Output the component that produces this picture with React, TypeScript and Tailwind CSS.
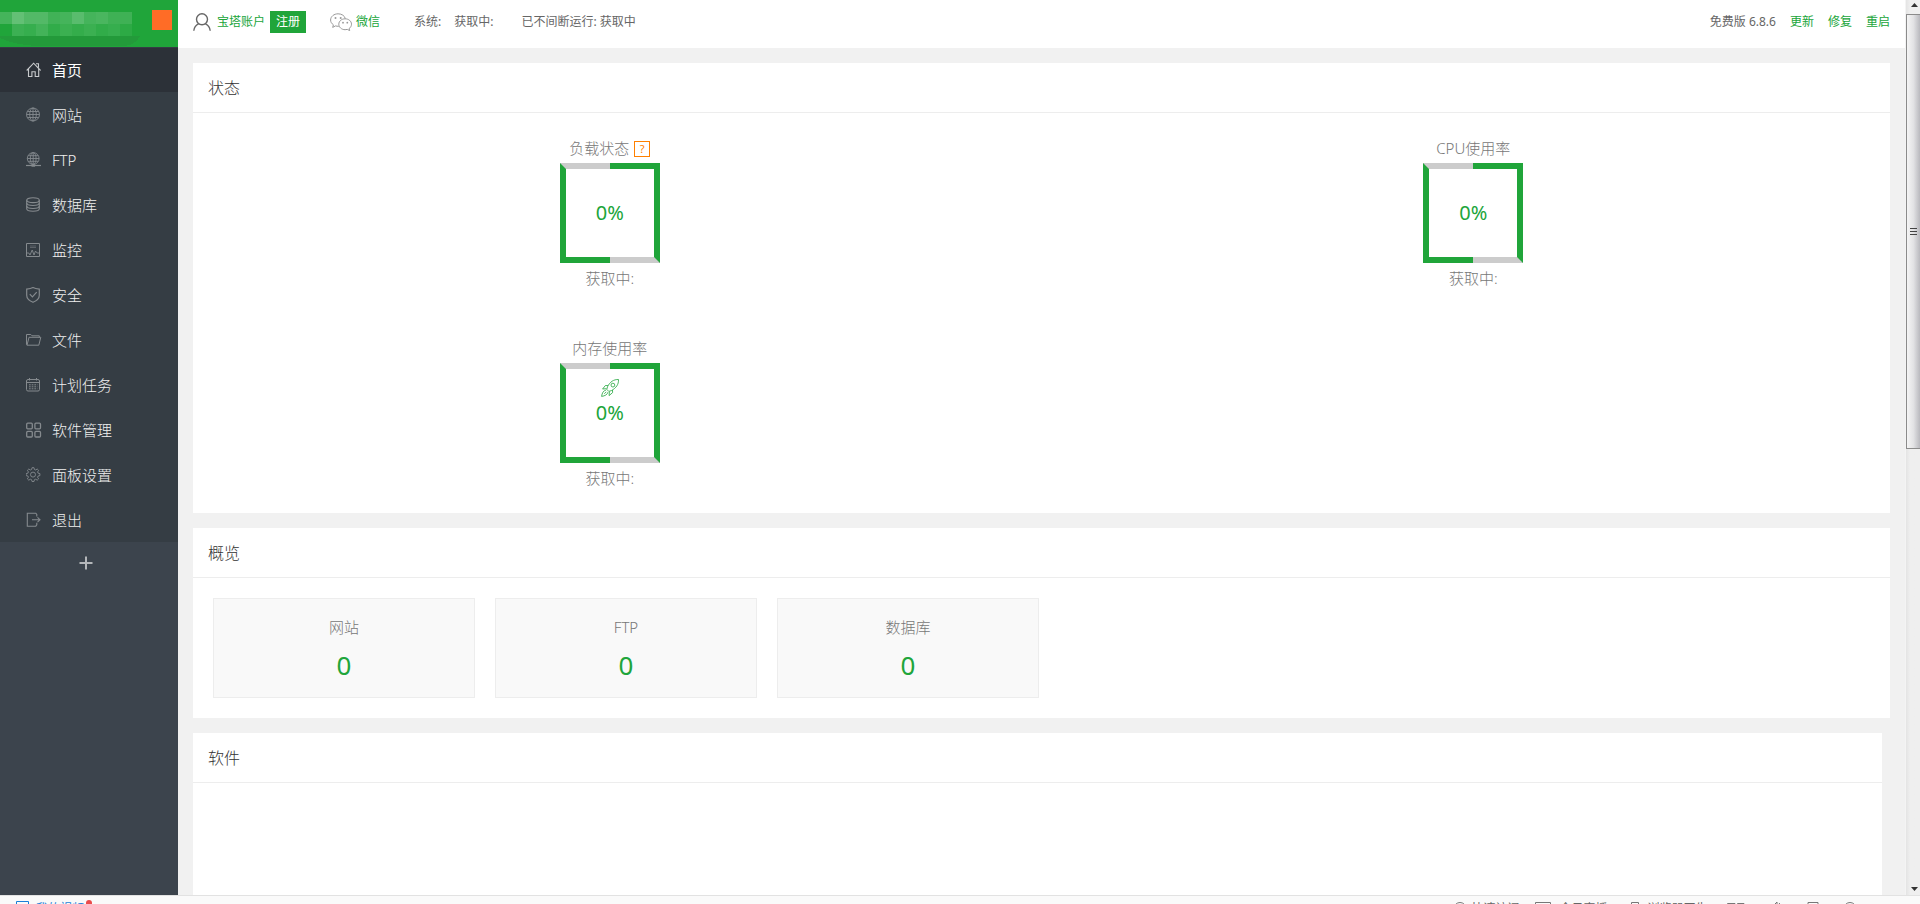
import React from 'react';

const ICON = 'size-4 shrink-0 fill-none stroke-current';

const HomeIcon = () => (
  <svg viewBox="0 0 16 16" className={ICON} strokeWidth="1.1">
    <path d="M.7 8.500 7.600 1.200l7 7.300" />
    <path d="M2.500 7v7.500h3.400V9.800h3.300v4.700h3.500V7" />
    <path d="M10 1.700h2.500v4" />
  </svg>
);

const GlobeIcon = () => (
  <svg viewBox="0 0 16 16" className={ICON} strokeWidth="0.9">
    <circle cx="7" cy="7.500" r="6.500" />
    <ellipse cx="7" cy="7.500" rx="3.300" ry="6.500" />
    <path d="M7 1v13M.5 7.500h13M1.500 4.500h11M1.500 10.500h11" />
  </svg>
);

const FtpIcon = () => (
  <svg viewBox="0 0 16 16" className={ICON} strokeWidth="0.9">
    <circle cx="7.2" cy="6.500" r="5.900" />
    <ellipse cx="7.2" cy="6.500" rx="2.900" ry="5.900" />
    <path d="M7.200.6v13M1.300 6.500h11.800M2.200 3.700h10M2.200 9.300h10" />
    <path d="M0 13.500h15" strokeWidth="1.200" />
    <path d="M5.500 13.500h3.600" strokeWidth="2.400" />
  </svg>
);

const DatabaseIcon = () => (
  <svg viewBox="0 0 16 16" className={ICON} strokeWidth="1.100">
    <ellipse cx="7" cy="3.200" rx="6.300" ry="2.400" />
    <path d="M.7 3.200v8.600c0 1.400 2.800 2.500 6.300 2.500s6.300-1.100 6.300-2.500V3.200" />
    <path d="M.7 6c0 1.400 2.800 2.500 6.300 2.500S13.300 7.400 13.300 6M.7 9c0 1.400 2.800 2.500 6.300 2.500s6.300-1.100 6.300-2.500" />
  </svg>
);

const MonitorIcon = () => (
  <svg viewBox="0 0 16 16" className={ICON} strokeWidth="1">
    <path d="M.5 1.500h13v13H.5z" />
    <path d="M4 4h6M4 5.500h6" strokeOpacity="0.500" />
    <path d="M1 11h1.800L4 13l2.200-5 1.800 5 1.500-4 1.600 2h2.400" strokeWidth="0.900" />
  </svg>
);

const ShieldIcon = () => (
  <svg viewBox="0 0 16 16" className={ICON} strokeWidth="1.200">
    <path d="M7 .6C5.100 1.700 3 2 .7 2.100v6.100c0 3.300 2.600 5.500 6.300 7.100 3.700-1.600 6.300-3.800 6.300-7.100V2.100C11 2 8.900 1.700 7 .6z" />
    <path d="m3.800 7.200 2.600 2.600 4.300-4.700" />
  </svg>
);

const FolderIcon = () => (
  <svg viewBox="0 0 16 16" className={ICON} strokeWidth="1">
    <path d="M1 13.200c-.4-.2-.5-.5-.5-1V2.500h4.300l1.200 1.300h7.300v1.600" />
    <path d="M1 13.200 3 5.300h11.800l-2 7.900z" />
  </svg>
);

const CalendarIcon = () => (
  <svg viewBox="0 0 16 16" className={ICON} strokeWidth="1">
    <rect x="0.500" y="2.500" width="13" height="11.500" rx="1.500" />
    <path d="M.5 5.500h13M3.500 1v2.500M10.500 1v2.500" />
    <path d="M3 7.800h8.500M3 9.800h8.500M3 11.800h8.500" strokeDasharray="1.700 1" />
  </svg>
);

const GridIcon = () => (
  <svg viewBox="0 0 16 16" className={ICON} strokeWidth="1.300">
    <rect x="0.700" y="1.200" width="5.600" height="5.600" rx="1" />
    <rect x="8.900" y="1.200" width="5.600" height="5.600" rx="1" />
    <rect x="0.700" y="9.400" width="5.600" height="5.600" rx="1" />
    <rect x="8.900" y="9.400" width="5.600" height="5.600" rx="1" />
  </svg>
);

const GearIcon = () => (
  <svg viewBox="0.500 0.500 16 16" className={ICON} strokeWidth="0.900">
    <path d="M6.500 1.200h2l.4 1.800 1.300.5 1.500-1 1.400 1.400-1 1.500.5 1.300 1.800.4v2l-1.800.4-.5 1.300 1 1.500-1.400 1.400-1.500-1-1.300.5-.4 1.800h-2l-.4-1.800-1.300-.5-1.500 1-1.400-1.400 1-1.500-.5-1.300L.6 9.100v-2l1.800-.4.5-1.300-1-1.500 1.400-1.400 1.500 1L6.100 3z" />
    <circle cx="7.500" cy="8.100" r="2.500" />
  </svg>
);

const ExitIcon = () => (
  <svg viewBox="0 0 16 16" className={ICON} strokeWidth="1.100">
    <path d="M10.800 4.500v-2L9.800 1.200H1.300v13h8.500l1-1.300v-2.200" />
    <path d="M6 7.700h8M11.500 5.300 14 7.700l-2.500 2.400" />
  </svg>
);

const UserIcon = () => (
  <svg viewBox="0 0 18 18" className="size-[18px] shrink-0 fill-none stroke-[#666]" strokeWidth="1.400">
    <circle cx="9" cy="6.300" r="5.500" />
    <path d="M.8 17.800c.3-3.500 2-5.800 4.800-7M17.200 17.800c-.3-3.500-2-5.800-4.800-7" />
  </svg>
);

const WechatIcon = () => (
  <svg viewBox="0 0 22 18" className="h-[18px] w-[22px] shrink-0 fill-none stroke-[#999]" strokeWidth="1">
    <path d="M15.300 5.600C14.700 2.800 11.700.8 8.100.8 4 .8.600 3.500.6 7c0 2 1 3.600 2.800 4.800l-.7 2.600 2.800-1.500c1 .3 2 .4 3.300.4" />
    <path d="M15.100 5.800c-3.500 0-6.300 2.400-6.300 5.400s2.800 5.500 6.300 5.500c.8 0 1.500-.1 2.200-.3l2.400 1.200-.6-2c1.400-1 2.400-2.600 2.400-4.400 0-3-2.900-5.400-6.400-5.400z" />
    <g className="fill-[#999] stroke-none">
      <circle cx="5.500" cy="5" r="1" />
      <circle cx="10.700" cy="5" r="1" />
      <circle cx="13" cy="9.700" r="0.900" />
      <circle cx="17.300" cy="9.700" r="0.900" />
    </g>
  </svg>
);

const RocketIcon = () => (
  <svg viewBox="0 0 18 18" className="size-[18px] fill-none stroke-[#20a53a]" strokeWidth="0.800">
    <path d="M17.500.5c-4.700-.2-8.600 2.300-11 7.300l-.7 2.600 2 2 2.600-.8C15.200 9 17.800 5.300 17.500.5z" />
    <circle cx="11.900" cy="6.100" r="1.900" />
    <path d="M7 6.600 4.400 6.500 1.600 10l3.900-.3M11.500 11l.1 2.600-3.500 3 .3-4M4.900 11.200C2.600 11.400 1 14 .6 17.400c3.400-.4 6-2 6.300-4.200M5.300 12.800l-2 2" />
  </svg>
);

const menu = [
  { label: '首页', icon: HomeIcon, active: true },
  { label: '网站', icon: GlobeIcon },
  { label: 'FTP', icon: FtpIcon },
  { label: '数据库', icon: DatabaseIcon },
  { label: '监控', icon: MonitorIcon },
  { label: '安全', icon: ShieldIcon },
  { label: '文件', icon: FolderIcon },
  { label: '计划任务', icon: CalendarIcon },
  { label: '软件管理', icon: GridIcon },
  { label: '面板设置', icon: GearIcon },
  { label: '退出', icon: ExitIcon },
];

const gauges = [
  { label: '负载状态', help: true },
  { label: 'CPU使用率' },
  { label: '内存使用率', rocket: true },
];

const totals = [
  { label: '网站', value: 0 },
  { label: 'FTP', value: 0 },
  { label: '数据库', value: 0 },
];

// opacity of each mosaic tile, 12px a tile
const mosaic = [
  [0.17, 0.3, 0.23, 0.23, 0.15, 0.17, 0.26, 0.17, 0.19, 0.14, 0.14],
  [0, 0.13, 0.1, 0.16, 0.08, 0.12, 0.09, 0.12, 0.08, 0.1, 0.06],
];

const Sidebar = () => (
  <aside className="w-[178px] shrink-0 bg-[#3c444d]">
    <div className="flex h-[47px] items-start justify-between bg-[#20a53a] pr-[6px]">
      <svg viewBox="0 0 142 47" className="h-[47px] w-[142px]" shapeRendering="crispEdges">
        {mosaic.map((row, y) =>
          row.map((o, x) => (
            <rect key={`${x}-${y}`} x={x * 12} y={12 + y * 12} width="12" height="12" fill="#fff" fillOpacity={o} />
          ))
        )}
        <path d="M0 36h140c-3 6-8 10-18 10H40C24 46 8 42 0 38z" fill="#239a3a" />
      </svg>
      <button aria-label="消息" className="mt-[10px] size-5 bg-[#ff6c26]" />
    </div>
    <nav>
      <ul className="flex flex-col gap-px bg-[#353d44] pt-px">
        {menu.map(({ label, icon: Icon, active }) => (
          <li key={label}>
            <a
              href="#"
              className={`flex h-11 items-center gap-[10px] pl-[26px] text-[15px] leading-5 ${
                active ? 'bg-[#2c3138] text-white' : 'font-light text-[#f0f0f0]'
              }`}
            >
              <span className={active ? 'text-[#c8cacc]' : 'text-[#858a8e]'}>
                <Icon />
              </span>
              {label}
            </a>
          </li>
        ))}
      </ul>
    </nav>
    <button aria-label="添加" className="flex h-[42px] w-full items-center justify-center pr-[6px] text-[#b4b7ba]">
      <svg viewBox="0 0 14 14" className="size-[14px] fill-none stroke-current" strokeWidth="2">
        <path d="M7 .5v13M.5 7h13" />
      </svg>
    </button>
  </aside>
);

const Header = () => (
  <header className="flex h-12 items-start justify-between bg-white px-[15px] pt-[11px] text-xs leading-[22px] text-[#666]">
    <div className="flex items-center">
      <UserIcon />
      <a href="#" className="ml-[6px] text-[#20a53a]">宝塔账户</a>
      <a href="#" className="ml-[5px] bg-[#20a53a] px-[6px] text-white">注册</a>
      <a href="#" className="ml-6 flex items-center gap-1 text-[#20a53a]">
        <WechatIcon />
        微信
      </a>
      <span className="ml-[34px]">系统:</span>
      <span className="ml-[13px]">获取中:</span>
      <span className="ml-7">已不间断运行: 获取中</span>
    </div>
    <div className="flex items-center gap-[14px]">
      <span>免费版 6.8.6</span>
      <a href="#" className="text-[#20a53a]">更新</a>
      <a href="#" className="text-[#20a53a]">修复</a>
      <a href="#" className="text-[#20a53a]">重启</a>
    </div>
  </header>
);

const Panel: React.FC<{ title: string; className?: string; children?: React.ReactNode }> = ({ title, className, children }) => (
  <section className={`bg-white ${className ?? ''}`}>
    <h3 className="h-[50px] border-b border-[#ededed] px-[15px] text-base leading-[50px] font-light text-[#333]">{title}</h3>
    {children}
  </section>
);

const Gauge: React.FC<{ label: string; help?: boolean; rocket?: boolean }> = ({ label, help, rocket }) => (
  <li className="flex h-[200px] flex-col items-center pt-[25px] text-[15px] leading-5 text-[#777]">
    <h4 className="flex h-[25px] items-start gap-[5px] font-light">
      {label}
      {help && (
        <a href="#" className="mt-[3px] flex size-4 items-center justify-center border border-[#ff8000] text-[11px] leading-4 font-normal text-[#ff8000]">
          ?
        </a>
      )}
    </h4>
    <div className="relative flex size-[100px]">
      <div className="w-1/2 border-[6px] border-r-0 border-[#20a53a] border-t-[#ccc]" />
      <div className="w-1/2 border-[6px] border-l-0 border-[#20a53a] border-b-[#ccc]" />
      <div className="absolute inset-0 flex items-center justify-center text-xl text-[#20a53a]">0%</div>
      {rocket && (
        <div className="absolute inset-x-0 top-4 flex justify-center">
          <RocketIcon />
        </div>
      )}
    </div>
    <p className="mt-[5px] font-light">获取中:</p>
  </li>
);

const Scrollbar = () => (
  <div aria-hidden="true" className="flex w-[15px] shrink-0 flex-col items-center border-l border-[#f4f4f4] bg-linear-to-r from-[#e4e4e4] to-[#efefef] to-30%">
    <div className="flex h-[14px] items-start justify-center pt-[3px] pl-[2px]">
      <svg viewBox="0 0 7 4" className="h-1 w-[7px] fill-[#333]"><path d="M3.500 0 7 4H0z" /></svg>
    </div>
    <div className="flex h-[435px] w-full items-center justify-center border-y border-l border-[#8b8b8b] bg-linear-to-r from-[#f5f5f5] via-[#e2e2e4] to-[#b9b9be]">
      <svg viewBox="0 0 7 9" className="h-[9px] w-[7px] stroke-[#444]"><path d="M0 1.500h7M0 4.500h7M0 7.500h7" /></svg>
    </div>
    <div className="flex flex-1 items-end pb-1 pl-[2px]">
      <svg viewBox="0 0 7 4" className="h-1 w-[7px] fill-[#333]"><path d="M0 0h7L3.500 4z" /></svg>
    </div>
  </div>
);

const StatusBar = () => (
  <footer className="h-[9px] shrink-0 overflow-hidden border-t border-[#e2e2e2] bg-[#fafafa] text-xs leading-[26px] text-[#666]">
    <div className="flex h-[26px] items-center justify-between pr-[26px] pl-4">
      <div className="flex items-start text-[#1a7fd8]">
        <svg viewBox="0 0 14 14" className="mt-[5px] size-[14px] fill-none stroke-current"><path d="M.5.5h12v12H.5z" /></svg>
        <span className="ml-[6px]">我的视频</span>
        <i className="mt-1 ml-[2px] size-[6px] rounded-full bg-[#ea4b4b]" />
      </div>
      <div className="flex items-center">
        <svg viewBox="0 0 14 14" className="size-[14px] fill-none stroke-[#777]"><circle cx="7" cy="6.500" r="6" /></svg>
        <span className="ml-1">快速访问</span>
        <svg viewBox="0 0 16 14" className="ml-4 h-[14px] w-4 fill-none stroke-[#777]"><path d="M.5.5h15v11H.5z" /></svg>
        <span className="ml-2">今日直播</span>
        <svg viewBox="0 0 8 14" className="ml-6 h-[14px] w-2 fill-none stroke-[#777]"><path d="M.5.5h7v12h-7z" /></svg>
        <span className="ml-2">浏览器医生</span>
        <svg viewBox="0 0 18 14" className="ml-5 h-[14px] w-[18px] fill-none stroke-[#777]"><path d="M.5 13V1.500H8V13M10.500 13V1.500H17V13" /></svg>
        <svg viewBox="0 0 14 14" className="ml-6 size-[14px] fill-none stroke-[#777]"><path d="M1 4h3l4-4v12L4 8H1zM10 1c3 3 3 7 0 10" /></svg>
        <svg viewBox="0 0 12 14" className="ml-6 h-[14px] w-3 fill-none stroke-[#777]"><path d="M1 .5h10v12H1z" /></svg>
        <svg viewBox="0 0 14 14" className="ml-6 size-[14px] fill-none stroke-[#777]"><circle cx="7" cy="6.500" r="6" /></svg>
        <span className="ml-[6px]">100%</span>
      </div>
    </div>
  </footer>
);

const App: React.FC = () => {
  return (
    <div className="flex h-screen flex-col overflow-hidden font-['Noto_Sans','Noto_Sans_CJK_SC',sans-serif]">
      <div className="flex min-h-0 flex-1">
        <Sidebar />

        <div className="flex min-w-0 flex-1 flex-col overflow-hidden bg-[#f1f1f1]">
          <Header />
          <main className="flex flex-1 flex-col gap-[15px] px-[15px] pt-[15px]">
            <Panel title="状态">
              <ul className="-mx-[15px] grid grid-cols-2">
                {gauges.map(g => (
                  <Gauge key={g.label} {...g} />
                ))}
              </ul>
            </Panel>

            <Panel title="概览">
              <ul className="flex gap-5 p-5">
                {totals.map(t => (
                  <li key={t.label} className="h-[100px] w-[262px] border border-[#ededed] bg-[#f9f9f9] pt-[18px] text-center">
                    <p className="text-[15px] leading-5 font-light text-[#777]">{t.label}</p>
                    <a href="#" className="mt-3 block text-[26px] leading-8 text-[#20a53a]">{t.value}</a>
                  </li>
                ))}
              </ul>
            </Panel>

            <Panel title="软件" className="mr-2 flex-1" />
          </main>
        </div>

        <Scrollbar />
      </div>
      <StatusBar />
    </div>
  );
};

export default App;
